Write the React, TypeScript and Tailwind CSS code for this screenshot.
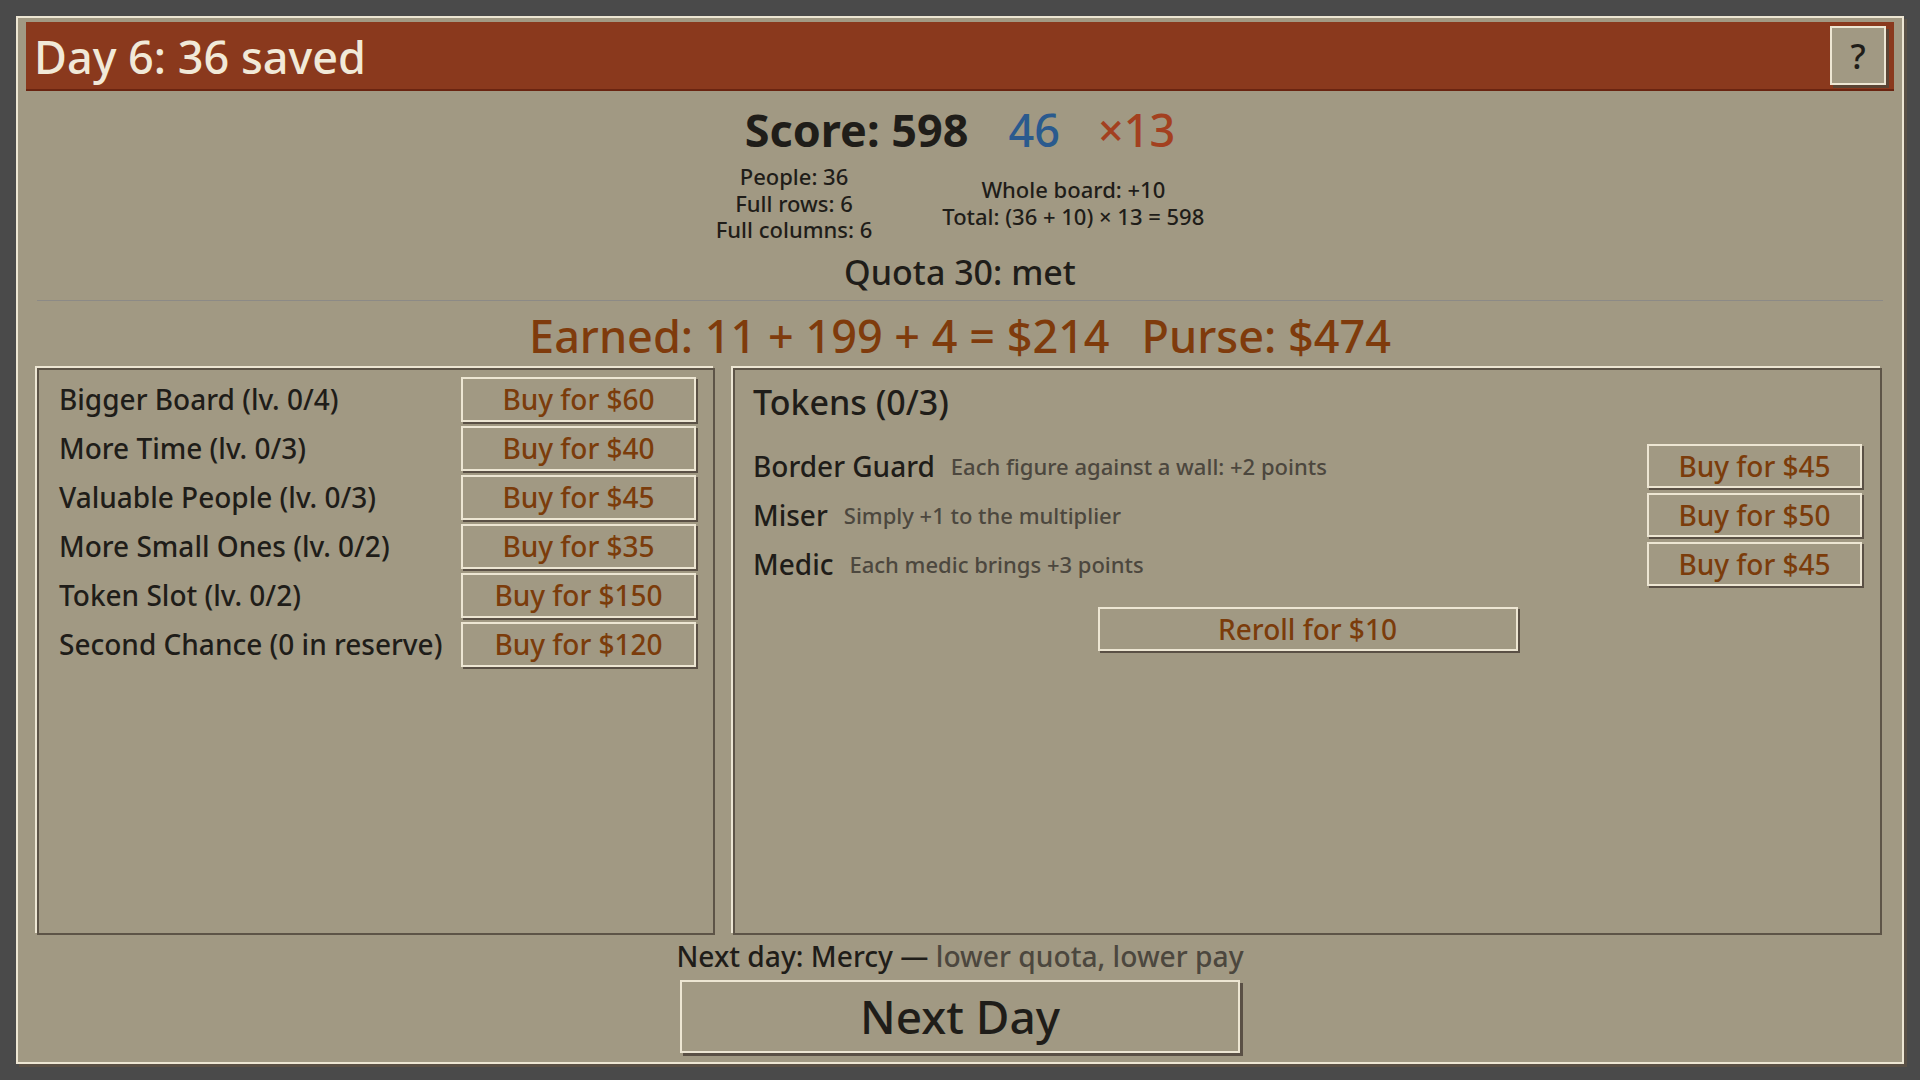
import React, { FC, ReactNode } from 'react';

interface ShopButtonProps {
    label: string;
    width: string;
    height: string;
    textClass?: string;
}

// Raised tan button: light rim with a dark drop edge on the bottom-right
const ShopButton: FC<ShopButtonProps> = ({ label, width, height, textClass }) => (
    <button
        className={[
            'flex items-center justify-center shrink-0 border-2 border-[#ede6d3] bg-[#a19983] shadow-[2px_2px_0_#5a5045] leading-none',
            width,
            height,
            textClass ?? 'text-[28px] text-[#7b3c0b]',
        ].join(' ')}
    >
        {label}
    </button>
);

const Panel: FC<{ className: string; children: ReactNode }> = ({ className, children }) => (
    <div className={['border-2 border-[#5d5447] shadow-[-2px_-2px_0_#ede6d3]', className].join(' ')}>{children}</div>
);

const App = () => {
    const upgrades = [
        { name: 'Bigger Board (lv. 0/4)', price: 60 },
        { name: 'More Time (lv. 0/3)', price: 40 },
        { name: 'Valuable People (lv. 0/3)', price: 45 },
        { name: 'More Small Ones (lv. 0/2)', price: 35 },
        { name: 'Token Slot (lv. 0/2)', price: 150 },
        { name: 'Second Chance (0 in reserve)', price: 120 },
    ];
    const tokens = [
        { name: 'Border Guard', desc: 'Each figure against a wall: +2 points', price: 45 },
        { name: 'Miser', desc: 'Simply +1 to the multiplier', price: 50 },
        { name: 'Medic', desc: 'Each medic brings +3 points', price: 45 },
    ];

    return (
        <div className="w-[1920px] h-[1080px] bg-[#4a4a4a] p-4 font-['Noto_Sans',sans-serif] font-medium text-[#1f1d19]">
            <div className="h-[1048px] w-[1888px] border-2 border-[#ede6d3] bg-[#a19983] shadow-[3px_3px_0_#5a5045] pt-1 px-2 flex flex-col">
                {/* title bar */}
                <div className="h-[69px] bg-[#8a391d] border-b-2 border-[#6a2410] flex items-center pl-[8px] pr-2">
                    <div className="mt-[2px] text-[45px] leading-none text-[#f1e9d8]">Day 6: 36 saved</div>
                    <button className="ml-auto w-[56px] h-[59px] border-2 border-[#ede6d3] bg-[#a19983] shadow-[3px_3px_0_#5a4434] flex items-center justify-center text-[34px] leading-none">
                        ?
                    </button>
                </div>

                {/* score summary */}
                <div className="mt-4 flex justify-center items-center h-[45px] text-[45px] leading-none">
                    <span className="font-bold">Score: 598</span>
                    <span className="ml-[40px] text-[#2a5a8e]">46</span>
                    <span className="ml-[38px] text-[#a3401f]">×13</span>
                </div>
                <div className="mt-[11px] flex justify-center items-center gap-[70px] text-[22px] leading-[26.5px] text-center">
                    <div>
                        <div>People: 36</div>
                        <div>Full rows: 6</div>
                        <div>Full columns: 6</div>
                    </div>
                    <div>
                        <div>Whole board: +10</div>
                        <div>Total: (36 + 10) × 13 = 598</div>
                    </div>
                </div>
                <div className="mt-[12px] text-center text-[34px] leading-none">Quota 30: met</div>
                <div className="mt-[11px] mx-[11px] h-px bg-[#8c8a86]" />

                <div className="mt-[12px] flex justify-center text-[45px] leading-none text-[#7f3b0c]">
                    <span>Earned: 11 + 199 + 4 = $214</span>
                    <span className="ml-8">Purse: $474</span>
                </div>

                {/* shop panels */}
                <div className="mt-[10px] flex gap-[18px] pl-[11px] pr-[12px] h-[567px]">
                    <Panel className="w-[678px] pt-[7px] pl-5 pr-[17px] flex flex-col gap-[4px]">
                        {upgrades.map((u) => (
                            <div key={u.name} className="flex items-center justify-between h-[45px]">
                                <span className="text-[28px] leading-none">{u.name}</span>
                                <ShopButton label={`Buy for $${u.price}`} width="w-[235px]" height="h-[45px]" />
                            </div>
                        ))}
                    </Panel>
                    <Panel className="flex-1 pt-[15px] pl-[18px] pr-[18px] flex flex-col">
                        <div className="text-[34px] leading-none">Tokens (0/3)</div>
                        <div className="mt-[25px] flex flex-col gap-[5px]">
                            {tokens.map((t) => (
                                <div key={t.name} className="flex items-center h-[44px]">
                                    <span className="text-[28px] leading-none">{t.name}</span>
                                    <span className="ml-[16px] text-[22px] leading-none text-[#4c473e]">{t.desc}</span>
                                    <div className="ml-auto">
                                        <ShopButton label={`Buy for $${t.price}`} width="w-[215px]" height="h-[44px]" />
                                    </div>
                                </div>
                            ))}
                        </div>
                        <div className="mt-[21px] flex justify-center">
                            <ShopButton label="Reroll for $10" width="w-[420px]" height="h-[44px]" />
                        </div>
                    </Panel>
                </div>

                <div className="mt-[7px] text-center text-[28.2px] leading-none">
                    Next day: Mercy — <span className="text-[#4c473e]">lower quota, lower pay</span>
                </div>
                <div className="mt-[10px] flex justify-center">
                    <ShopButton
                        label="Next Day"
                        width="w-[560px]"
                        height="h-[73px]"
                        textClass="text-[46px] text-[#1f1d19] shadow-[3px_3px_0_#5a5045]"
                    />
                </div>
            </div>
        </div>
    );
};

export default App;
